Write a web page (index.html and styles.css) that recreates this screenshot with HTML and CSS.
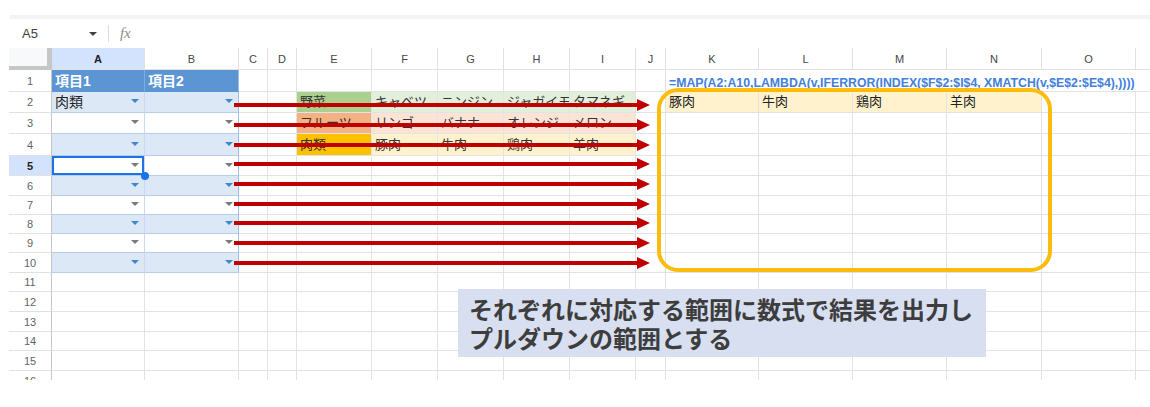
FILE: index.html
```html
<!DOCTYPE html>
<html lang="ja">
<head>
    <meta charset="UTF-8">
    <title>プルダウン連動</title>
    <link rel="stylesheet" href="styles.css">
</head>
<body>
    <div class="toolbar-edge"></div>
    <div class="formula-bar">
        <span class="name-box">A5</span>
        <span class="caret"></span>
        <span class="bar-sep"></span>
        <span class="fx">fx</span>
    </div>

    <div class="sheet-wrap">
        <div class="sheet" id="sheet"></div>

        <!-- 矢印と出力範囲の枠 -->
        <svg class="marks" width="1141" height="332">
            <defs>
                <g id="arrow">
                    <rect x="225" y="-2" width="405" height="4"></rect>
                    <polygon points="628,-6 641,0 628,6"></polygon>
                </g>
            </defs>
            <g fill="#c00000">
                <use href="#arrow" y="57"></use>
                <use href="#arrow" y="77"></use>
                <use href="#arrow" y="97"></use>
                <use href="#arrow" y="116"></use>
                <use href="#arrow" y="136"></use>
                <use href="#arrow" y="156"></use>
                <use href="#arrow" y="175"></use>
                <use href="#arrow" y="195"></use>
                <use href="#arrow" y="215"></use>
            </g>
            <rect x="650" y="42" width="391" height="180" rx="19" fill="none" stroke="#fbbc0e" stroke-width="4"></rect>
        </svg>

        <div class="note">
            それぞれに対応する範囲に数式で結果を出力し<br>
            プルダウンの範囲とする
        </div>
    </div>

    <script type="text/javascript">
        var sheet = document.getElementById('sheet');
        var cols = 'ABCDEFGHIJKLMNOP'.split('');
        // セルの中身
        var cells = {
            A1: ['項目1', 'tbl-head'], B1: ['項目2', 'tbl-head'],
            A2: ['肉類'],
            E2: ['野菜', 'veg-key'], F2: ['キャベツ', 'veg'], G2: ['ニンジン', 'veg'], H2: ['ジャガイモ', 'veg'], I2: ['タマネギ', 'veg'],
            E3: ['フルーツ', 'fruit-key'], F3: ['リンゴ', 'fruit'], G3: ['バナナ', 'fruit'], H3: ['オレンジ', 'fruit'], I3: ['メロン', 'fruit'],
            E4: ['肉類', 'meat-key'], F4: ['豚肉', 'meat'], G4: ['牛肉', 'meat'], H4: ['鶏肉', 'meat'], I4: ['羊肉', 'meat'],
            K1: ['=MAP(A2:A10,LAMBDA(v,IFERROR(INDEX($F$2:$I$4, XMATCH(v,$E$2:$E$4),))))', 'formula'],
            K2: ['豚肉', 'out'], L2: ['牛肉', 'out'], M2: ['鶏肉', 'out'], N2: ['羊肉', 'out']
        };

        function el(cls, text) {
            var d = document.createElement('div');
            d.className = cls;
            if (text) d.textContent = text;
            return d;
        }

        sheet.appendChild(el('corner'));
        cols.forEach(function (c) {
            sheet.appendChild(el('col-head' + (c == 'A' ? ' active' : ''), c));
        });

        for (var r = 1; r <= 16; r++) {
            sheet.appendChild(el('row-head' + (r == 5 ? ' active' : ''), String(r)));
            for (var i = 0; i < cols.length; i++) {
                var id = cols[i] + r;
                var info = cells[id] || [];
                var cls = 'cell';
                if (info[1]) cls += ' ' + info[1];
                // A2:B10 はプルダウン付きのテーブル
                if ((cols[i] == 'A' || cols[i] == 'B') && r >= 2 && r <= 10) {
                    cls += ' pick' + (r % 2 == 0 ? ' band' : '');
                }
                if (cols[i] == 'B' && r <= 10) cls += ' tbl-edge';
                if (id == 'A5') cls += ' current';
                sheet.appendChild(el(cls, info[0]));
                // 数式はK1からO1まではみ出す
                if (id == 'K1') i += 4;
            }
        }
    </script>
</body>
</html>
```

FILE: styles.css
```css
*{
    box-sizing: border-box;
}
body{
    margin: 0;
    background: #fff;
    font-family: "Liberation Sans", "Noto Sans CJK JP", sans-serif;
    color: #202124;
}

/* ツールバーの下端 */
.toolbar-edge{
    height: 4px;
    margin: 15px 0 0 10px;
    background: #f3f3f3;
}

/* 名前ボックスと数式バー */
.formula-bar{
    height: 29px;
    display: flex;
    align-items: center;
    padding-left: 22px;
}
.name-box{
    font-size: 13px;
    color: #3c4043;
}
.caret{
    width: 0;
    height: 0;
    margin-left: 51px;
    border-left: 4px solid transparent;
    border-right: 4px solid transparent;
    border-top: 4px solid #3c4043;
}
.bar-sep{
    width: 1px;
    height: 17px;
    margin-left: 11px;
    background: #dadce0;
}
.fx{
    margin-left: 11px;
    font-family: "Liberation Serif", serif;
    font-style: italic;
    font-size: 15px;
    color: #8c8c8c;
}

/* シート本体 */
.sheet-wrap{
    position: relative;
    margin-left: 9px;
    height: 332px;
    overflow: hidden;
}
.sheet{
    display: grid;
    width: max-content;
    grid-template-columns: 43px 93px 94px 29px 29px 75px 66px 66px 66px 66px 30px 93px 94px 94px 95px 94px 94px;
    grid-template-rows: 22px 22px 21px 21px 22px 20px 20px 19px 19px 19px 20px 19px 20px 20px 19px 20px 20px;
}
.corner{
    background: #f8f9fa;
    border-right: 5px solid #c4c7c5;
    border-bottom: 4px solid #c4c7c5;
}
.col-head,
.row-head{
    display: flex;
    align-items: center;
    justify-content: center;
    font-size: 11px;
    color: #444746;
    border-bottom: 1px solid #e1e1e1;
}
.col-head{
    border-right: 1px solid #e1e1e1;
}
.row-head{
    border-right: 1px solid #c4c7c5;
    color: #5f6368;
}
.col-head.active,
.row-head.active{
    background: #d3e3fd;
    font-weight: bold;
    color: #1f1f1f;
}

.cell{
    display: flex;
    align-items: flex-end;
    min-width: 0;
    padding: 0 3px 2px;
    border-right: 1px solid #e2e3e3;
    border-bottom: 1px solid #e2e3e3;
    font-size: 13px;
    line-height: 16px;
    white-space: nowrap;
    overflow: hidden;
}

/* 項目テーブル */
.tbl-head{
    background: #5b95d3;
    color: #fff;
    font-weight: bold;
    font-size: 14px;
    border-right-color: #80addf;
    border-bottom-color: #5b95d3;
}
.pick{
    font-size: 14px;
    border-right-color: #c8d9ef;
    border-bottom-color: #b6cdeb;
}
.band{
    background: #dde8f6;
}
.cell.tbl-edge{
    border-right-color: #9fbfe6;
}
.pick::after{
    content: "";
    align-self: center;
    margin-left: auto;
    margin-right: 2px;
    border-left: 4px solid transparent;
    border-right: 4px solid transparent;
    border-top: 4px solid #7a7a7a;
}
.band::after{
    border-top-color: #3f86cf;
}
.current{
    position: relative;
    overflow: visible;
    box-shadow: inset 0 0 0 2px #1a73e8;
}
.current::before{
    content: "";
    position: absolute;
    right: -5px;
    bottom: -5px;
    width: 8px;
    height: 8px;
    border-radius: 50%;
    background: #1a73e8;
    z-index: 1;
}

/* 分類ごとの候補 */
.veg-key,
.veg,
.fruit-key,
.fruit,
.meat-key,
.meat{
    color: #333;
}
.veg-key{ background: #a9d08e; }
.veg{ background: #e2efda; }
.fruit-key{ background: #f4b183; }
.fruit{ background: #fbe4d5; }
.meat-key{ background: #ffc000; }
.meat{ background: #fff2cc; }

/* 数式と出力結果 */
.formula{
    grid-column: span 5;
    overflow: visible;
    padding-bottom: 0;
    font-size: 12.3px;
    font-weight: bold;
    color: #4180dc;
    border-right: none;
}
.out{
    background: #fff2cc;
    font-size: 13px;
}

/* 上に重ねる矢印と説明 */
.marks{
    position: absolute;
    left: 0;
    top: 0;
    pointer-events: none;
}
.note{
    position: absolute;
    left: 449px;
    top: 241px;
    width: 528px;
    height: 68px;
    padding: 5px 11px 0;
    background: #d7dff0;
    font-family: "Noto Sans CJK JP", sans-serif;
    font-weight: bold;
    font-size: 24px;
    line-height: 29px;
    color: #3d3d3d;
}
```
